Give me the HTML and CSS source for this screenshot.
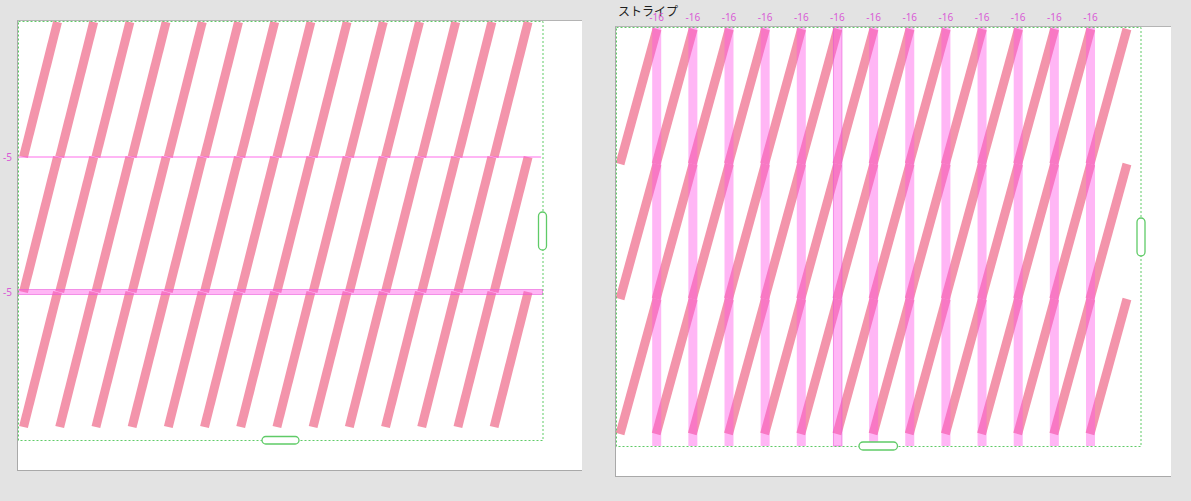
FILE: index.html
```html
<!DOCTYPE html>
<html lang="ja">
<head>
<meta charset="utf-8">
<title>ストライプ</title>
<link rel="stylesheet" href="styles.css">
</head>
<body>
<div class="stage">
  <section class="panel panel-left">
    <svg class="canvas" width="564" height="449" viewBox="0 0 564 449">
      <defs>
        <line id="barL" x1="57.5" y1="22" x2="23.5" y2="157" class="diag"/>
        <g id="rowL">
          <use href="#barL" x="0"/><use href="#barL" x="36.2"/><use href="#barL" x="72.4"/>
          <use href="#barL" x="108.6"/><use href="#barL" x="144.8"/><use href="#barL" x="181"/>
          <use href="#barL" x="217.2"/><use href="#barL" x="253.4"/><use href="#barL" x="289.6"/>
          <use href="#barL" x="325.8"/><use href="#barL" x="362"/><use href="#barL" x="398.2"/>
          <use href="#barL" x="434.4"/><use href="#barL" x="470.6"/>
        </g>
      </defs>
      <g transform="translate(-18 -21)">
        <use href="#rowL" y="0"/>
        <use href="#rowL" y="135"/>
        <use href="#rowL" y="270"/>
        <rect class="guide" x="18" y="156" width="523" height="2"/>
        <rect class="guide guide-sel" x="18.5" y="289.5" width="524" height="5"/>
        <rect class="frame" x="18.5" y="21.5" width="524.5" height="419"/>
        <rect class="handle" x="262" y="436.5" width="37" height="7.5" rx="3.75"/>
        <rect class="handle" x="538.5" y="212" width="8" height="38" rx="4"/>
        <text class="num" x="3" y="161">-5</text>
        <text class="num" x="3" y="296">-5</text>
      </g>
    </svg>
  </section>

  <div class="column">
    <div class="title">ストライプ</div>
    <section class="panel panel-right">
      <svg class="canvas" width="555" height="449" viewBox="0 0 555 449">
        <defs>
          <line id="barR" x1="657" y1="29" x2="620" y2="164" class="diag"/>
          <g id="rowR">
            <use href="#barR" x="0"/><use href="#barR" x="36.15"/><use href="#barR" x="72.3"/>
            <use href="#barR" x="108.45"/><use href="#barR" x="144.6"/><use href="#barR" x="180.75"/>
            <use href="#barR" x="216.9"/><use href="#barR" x="253.05"/><use href="#barR" x="289.2"/>
            <use href="#barR" x="325.35"/><use href="#barR" x="361.5"/><use href="#barR" x="397.65"/>
            <use href="#barR" x="433.8"/><use href="#barR" x="469.95"/>
          </g>
          <rect id="vbar" class="guide" x="652.2" y="27" width="9" height="419"/>
          <text id="lbl" class="num" x="656.7" y="21" text-anchor="middle">-16</text>
        </defs>
        <g transform="translate(-616 -27)">
          <use href="#rowR" y="0"/>
          <use href="#rowR" y="135"/>
          <use href="#rowR" y="270"/>
          <use href="#vbar" x="0"/><use href="#vbar" x="36.15"/><use href="#vbar" x="72.3"/>
          <use href="#vbar" x="108.45"/><use href="#vbar" x="144.6"/>
          <rect class="guide guide-sel" x="833.45" y="27" width="8.5" height="419"/>
          <use href="#vbar" x="216.9"/><use href="#vbar" x="253.05"/><use href="#vbar" x="289.2"/>
          <use href="#vbar" x="325.35"/><use href="#vbar" x="361.5"/><use href="#vbar" x="397.65"/>
          <use href="#vbar" x="433.8"/>
          <rect class="frame" x="616.5" y="27.5" width="524.5" height="419"/>
          <rect class="handle" x="859" y="442" width="38.5" height="8" rx="4"/>
          <rect class="handle" x="1137" y="218" width="8" height="38" rx="4"/>
        </g>
      </svg>
      <svg class="labels" width="555" height="30" viewBox="0 0 555 30">
        <g transform="translate(-616 0)">
          <use href="#lbl" x="0"/><use href="#lbl" x="36.15"/><use href="#lbl" x="72.3"/>
          <use href="#lbl" x="108.45"/><use href="#lbl" x="144.6"/><use href="#lbl" x="180.75"/>
          <use href="#lbl" x="216.9"/><use href="#lbl" x="253.05"/><use href="#lbl" x="289.2"/>
          <use href="#lbl" x="325.35"/><use href="#lbl" x="361.5"/><use href="#lbl" x="397.65"/>
          <use href="#lbl" x="433.8"/>
        </g>
      </svg>
    </section>
  </div>
</div>
</body>
</html>
```

FILE: styles.css
```css
html, body {
  margin: 0;
  padding: 0;
  background: #e3e3e3;
  width: 1191px;
  height: 501px;
  overflow: hidden;
  font-family: "Noto Sans", "Noto Sans CJK JP", sans-serif;
}

.stage {
  display: flex;
  align-items: flex-start;
}

.panel {
  position: relative;
  background: #ffffff;
  border-top: 1px solid #b4b4b4;
  border-left: 1px solid #a9a9a9;
  border-bottom: 1px solid #a9a9a9;
}

.panel-left {
  margin: 20px 0 0 17px;
  width: 564px;
  height: 449px;
}

.column {
  margin-left: 33px;
  padding-top: 4px;
  display: flex;
  flex-direction: column;
}

.title {
  height: 22px;
  line-height: 14px;
  font-size: 12px;
  color: #1e1e1e;
  padding-left: 3px;
  font-family: "Noto Sans CJK JP", sans-serif;
}

.panel-right {
  width: 555px;
  height: 449px;
}

.canvas {
  display: block;
  overflow: visible;
}

.labels {
  position: absolute;
  left: 0;
  top: -27px;
  overflow: visible;
}

.diag {
  stroke: #f394ab;
  stroke-width: 9;
  stroke-linecap: butt;
}

.guide {
  fill: rgba(255, 80, 232, 0.42);
}

.guide-sel {
  fill: rgba(255, 80, 232, 0.42);
  stroke: rgba(232, 80, 215, 0.55);
  stroke-width: 1;
}

.frame {
  fill: none;
  stroke: #5fcb67;
  stroke-width: 1;
  stroke-dasharray: 2 2;
}

.handle {
  fill: #ffffff;
  stroke: #5fcb67;
  stroke-width: 1.3;
}

.num {
  font-family: "Noto Sans", "Liberation Sans", sans-serif;
  font-size: 10px;
  fill: #d95bd6;
}
```
